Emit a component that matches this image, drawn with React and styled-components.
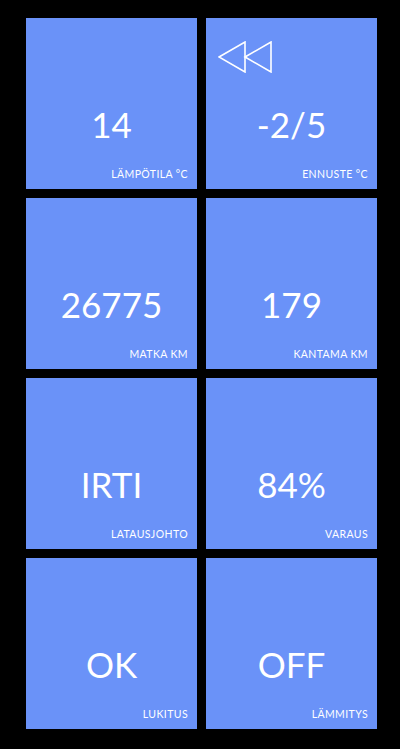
import React from "react"
import styled, { createGlobalStyle } from "styled-components"

const GlobalStyle = createGlobalStyle`
  html, body {
    margin: 0;
    padding: 0;
    background: #000;
  }
`

const Screen = styled.div`
  width: 400px;
  height: 749px;
  box-sizing: border-box;
  padding: 18px 23px 20px 26px;
  background: #000;
  display: grid;
  grid-template-columns: 171px 171px;
  grid-auto-rows: 171px;
  gap: 9px 9px;
  font-family: Lato, "Noto Sans", sans-serif;
  color: #fff;
`

const Tile = styled.div`
  position: relative;
  background: #6a92f8;
  display: flex;
  flex-direction: column;
  justify-content: flex-end;
  padding: 0 9px 9px 9px;
`

const Value = styled.div`
  font-size: 35px;
  line-height: 40px;
  text-align: center;
  margin-bottom: 24px;
`

const Label = styled.div`
  font-size: 10.5px;
  line-height: 12px;
  text-align: right;
  text-transform: uppercase;
  letter-spacing: 0.4px;
`

const IconButton = styled.div`
  position: absolute;
  top: 23px;
  left: 12px;
  width: 54px;
  height: 32px;
`

const RewindIcon = () => (
  <svg width="54" height="32" viewBox="-1 -1 54 32" fill="none" stroke="#fff" strokeWidth="1.6" strokeLinejoin="miter">
    <polygon points="0,15 26,0 26,30" />
    <polygon points="26,15 52,0 52,30" />
  </svg>
)

const tiles = [
  { value: "14", label: "Lämpötila °C" },
  { value: "-2/5", label: "Ennuste °C", icon: true },
  { value: "26775", label: "Matka km" },
  { value: "179", label: "Kantama km" },
  { value: "IRTI", label: "Latausjohto" },
  { value: "84%", label: "Varaus" },
  { value: "OK", label: "Lukitus" },
  { value: "OFF", label: "Lämmitys" },
]

const App = () => (
  <>
    <GlobalStyle />
    <Screen>
      {tiles.map((t) => (
        <Tile key={t.label}>
          {t.icon && (
            <IconButton>
              <RewindIcon />
            </IconButton>
          )}
          <Value>{t.value}</Value>
          <Label>{t.label}</Label>
        </Tile>
      ))}
    </Screen>
  </>
)

export default App
